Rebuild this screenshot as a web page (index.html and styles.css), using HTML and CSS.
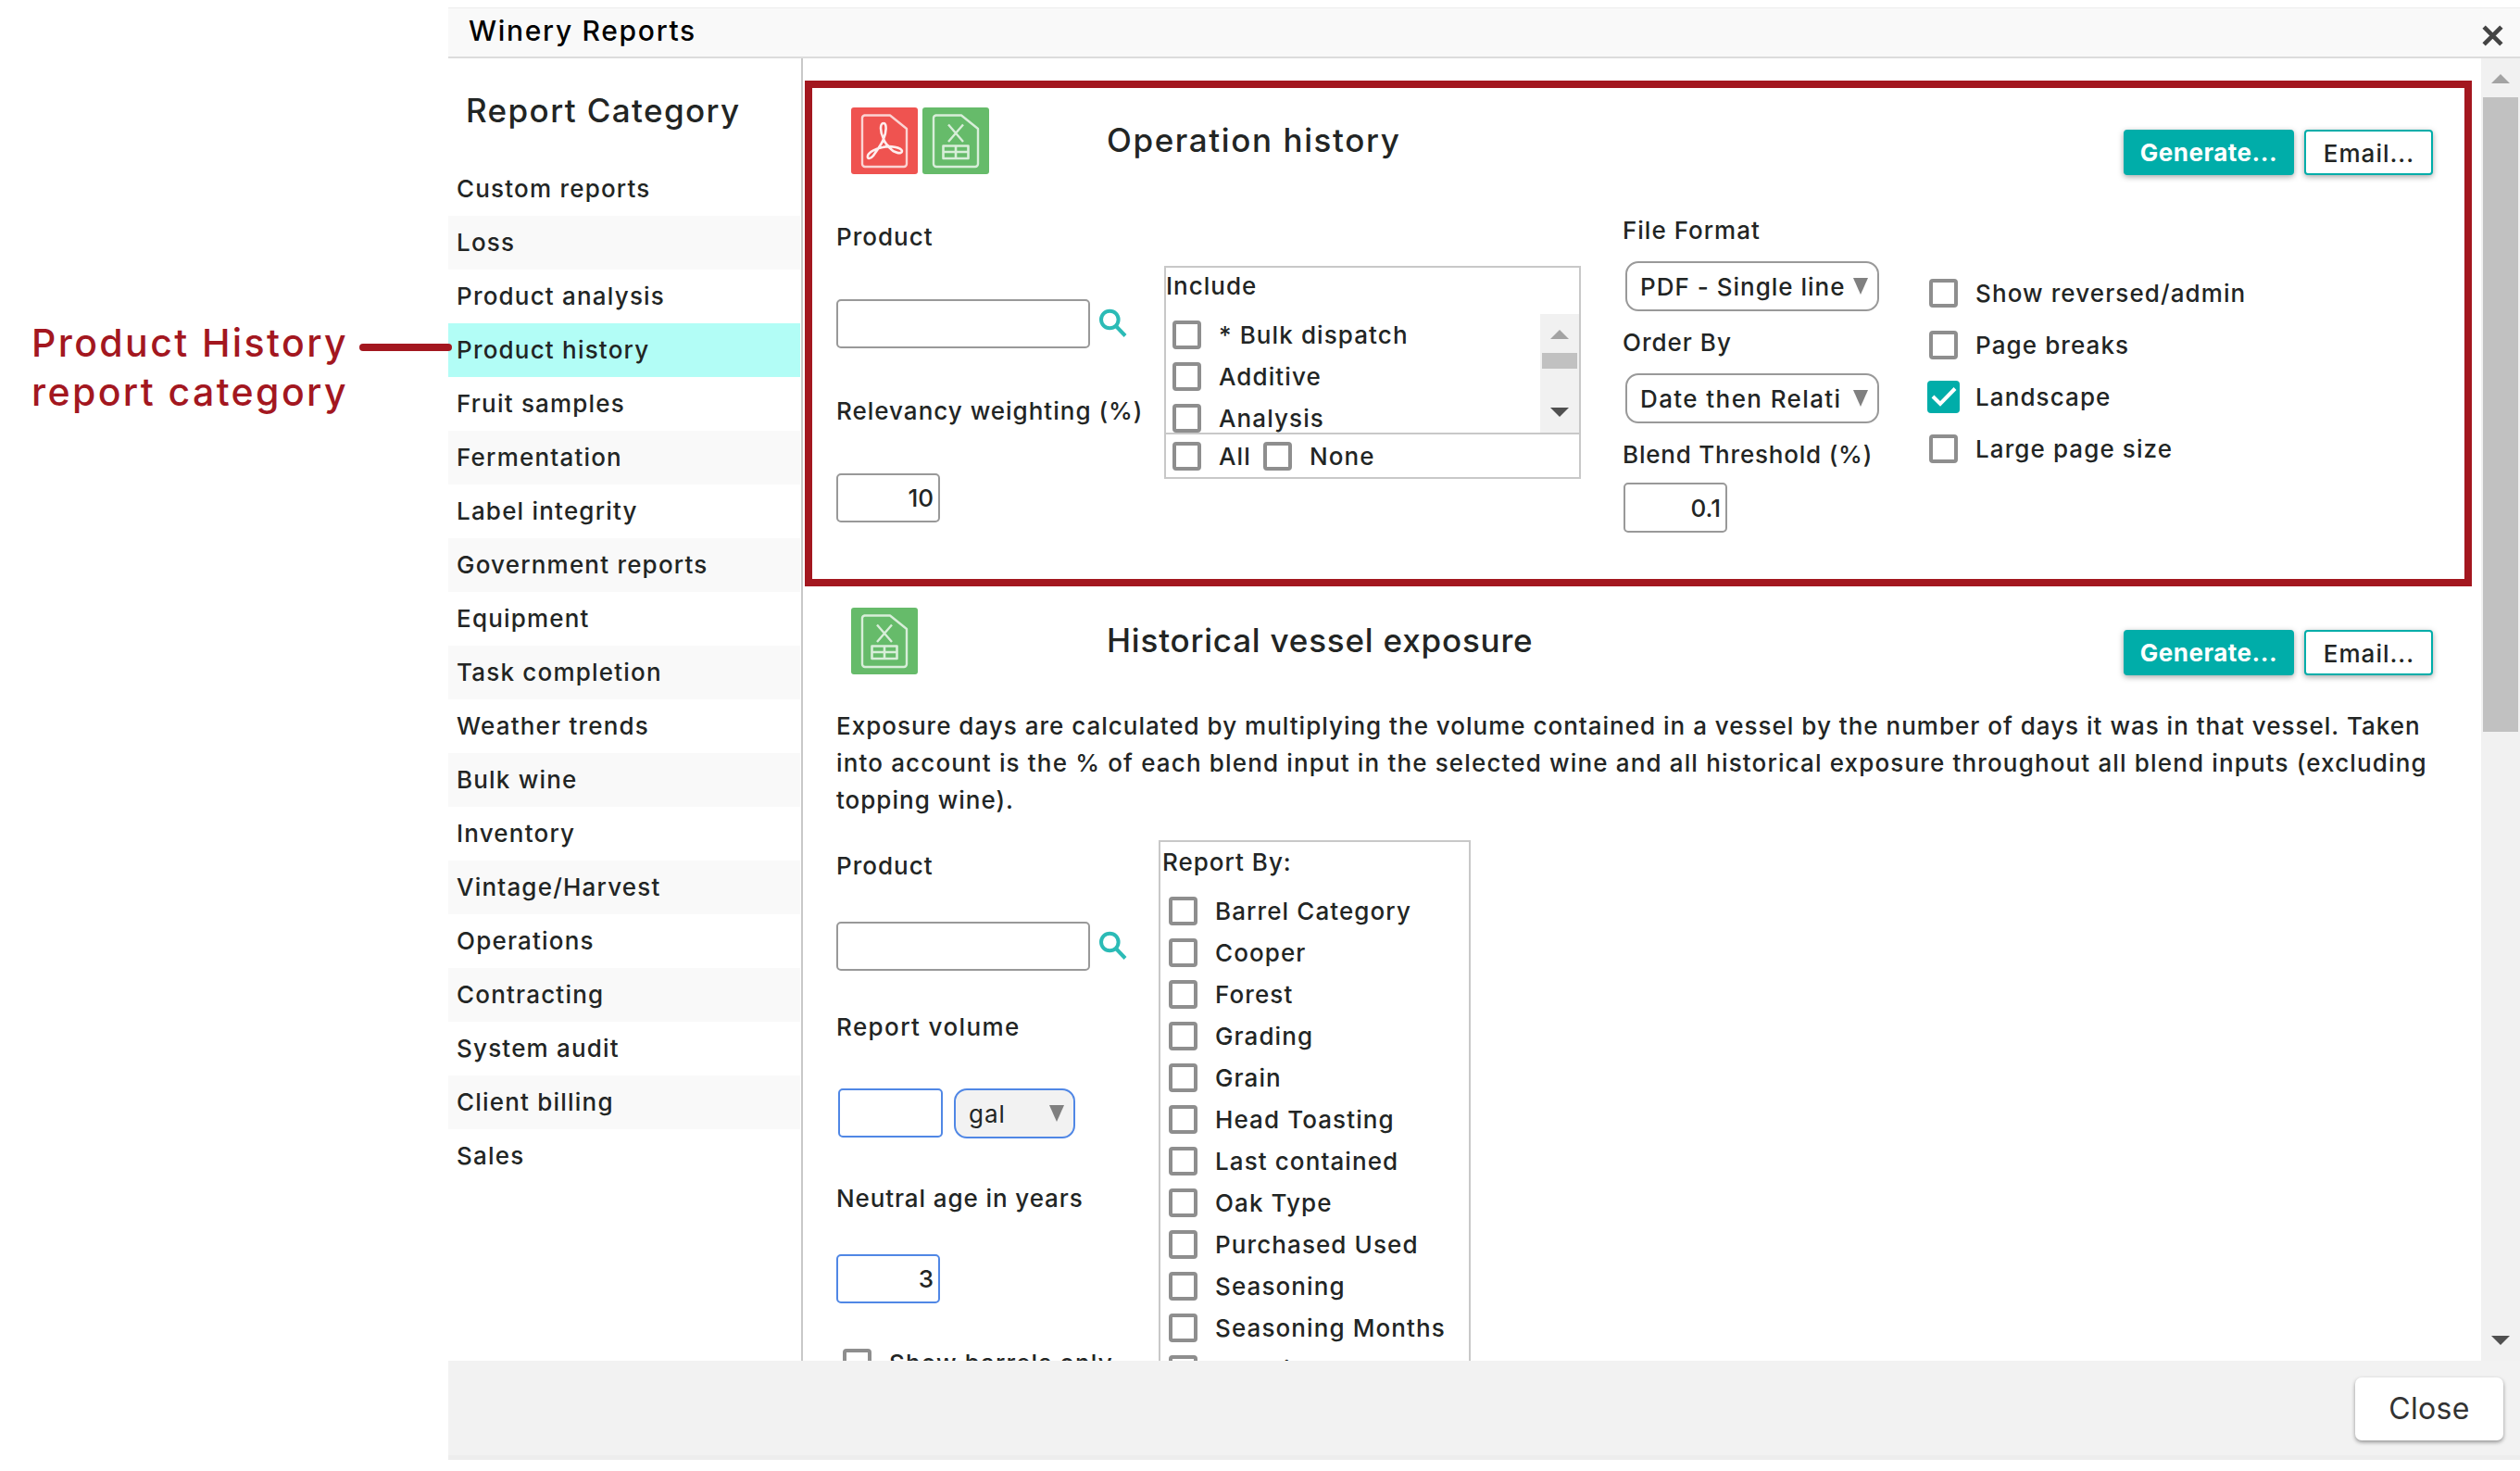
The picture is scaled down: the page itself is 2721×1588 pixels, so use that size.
FILE: index.html
```html
<!DOCTYPE html>
<html lang="en">
<head>
  <meta charset="UTF-8" />
  <title>Winery Reports</title>
  <link rel="stylesheet" href="styles.css">
</head>
<body>

  <!-- shared icons -->
  <svg class="icon-defs" width="0" height="0">
    <symbol id="icon-pdf" viewBox="0 0 72 72">
      <rect width="72" height="72" rx="3" fill="#ef5350"/>
      <g fill="none" stroke="#fff" stroke-linejoin="round">
        <path stroke-width="2.400" stroke-opacity=".75" d="M14 8.500H42L60 23V61a3 3 0 0 1-3 3H15a3 3 0 0 1-3-3V11a3 3 0 0 1 3-2.500"/>
        <path stroke-width="2.600" stroke-opacity=".9" d="M35 34C31 26 31 17 35 17C39 17 38 27 35 34C33 40 28 46 24 52C21 56 17 56 18 52C19 48 28 44 34 43C42 41 54 43 55 47C55 51 46 49 42 44C38 40 36 37 35 34Z"/>
      </g>
    </symbol>
    <symbol id="icon-xls" viewBox="0 0 72 72">
      <rect width="72" height="72" rx="3" fill="#66bb6a"/>
      <g fill="none" stroke="#fff" stroke-opacity=".75" stroke-width="2.400" stroke-linejoin="round">
        <path d="M14 8.500H42L60 23V61a3 3 0 0 1-3 3H15a3 3 0 0 1-3-3V11a3 3 0 0 1 3-2.500"/>
        <path d="M28 18.500L44 37M44 18.500L28 37"/>
        <path stroke-width="2.600" d="M22.500 41.500H49.500V55H22.500ZM22.500 48H49.500M36 41.500V55"/>
      </g>
    </symbol>
    <symbol id="icon-search" viewBox="0 0 32 32">
      <g fill="none" stroke="#2bbbb6" stroke-width="4">
        <circle cx="12.300" cy="12" r="9.300"/>
        <path d="M18.500 18.500L29 29.500"/>
      </g>
    </symbol>
  </svg>

  <div class="note">
    <div class="note-text">Product History<br/>report category</div>
    <div class="note-line"></div>
  </div>

  <div class="dialog">
    <div class="dialog-header">
      <div class="dialog-title">Winery Reports</div>
      <svg class="dialog-x" viewBox="0 0 24 24"><path d="M3 3L21 21M21 3L3 21" stroke="#444" stroke-width="4.500"/></svg>
    </div>

    <div class="dialog-body">
      <div class="sidebar">
        <div class="sidebar-title">Report Category</div>
        <ul class="categories">
          <li>Custom reports</li>
          <li>Loss</li>
          <li>Product analysis</li>
          <li class="active">Product history</li>
          <li>Fruit samples</li>
          <li>Fermentation</li>
          <li>Label integrity</li>
          <li>Government reports</li>
          <li>Equipment</li>
          <li>Task completion</li>
          <li>Weather trends</li>
          <li>Bulk wine</li>
          <li>Inventory</li>
          <li>Vintage/Harvest</li>
          <li>Operations</li>
          <li>Contracting</li>
          <li>System audit</li>
          <li>Client billing</li>
          <li>Sales</li>
        </ul>
      </div>

      <div class="reports">
        <!-- Operation history -->
        <div class="report highlighted">
          <div class="report-head">
            <div class="report-icons">
              <svg><use href="#icon-pdf"/></svg>
              <svg><use href="#icon-xls"/></svg>
            </div>
            <div class="report-title operation-title">Operation history</div>
            <div class="report-buttons">
              <button class="btn btn-primary">Generate...</button>
              <button class="btn">Email...</button>
            </div>
          </div>

          <div class="columns">
            <div class="product-col">
              <div class="label">Product</div>
              <div class="field-row">
                <input type="text" class="text-input" />
                <svg class="search"><use href="#icon-search"/></svg>
              </div>
              <div class="label weighting-label">Relevancy weighting (%)</div>
              <div class="field-row">
                <input type="text" class="text-input number" value="10" />
              </div>
            </div>

            <div class="panel include-panel">
              <div class="panel-title">Include</div>
              <div class="include-list">
                <div class="include-items">
                  <label class="check"><span class="box"></span>* Bulk dispatch</label>
                  <label class="check"><span class="box"></span>Additive</label>
                  <label class="check"><span class="box"></span>Analysis</label>
                </div>
                <div class="scrollbar small">
                  <div class="arrow-up"></div>
                  <div class="thumb"></div>
                  <div class="arrow-down"></div>
                </div>
              </div>
              <div class="include-footer">
                <label class="check check-all"><span class="box"></span>All</label>
                <label class="check"><span class="box"></span>None</label>
              </div>
            </div>

            <div class="format-col">
              <div class="label">File Format</div>
              <div class="select"><span class="select-text">PDF - Single line</span><span class="caret"></span></div>
              <div class="label">Order By</div>
              <div class="select"><span class="select-text wide-text">Date then Relati</span><span class="caret"></span></div>
              <div class="label threshold-label">Blend Threshold (%)</div>
              <input type="text" class="text-input number threshold" value="0.1" />
            </div>

            <div class="options-col">
              <label class="check"><span class="box"></span>Show reversed/admin</label>
              <label class="check"><span class="box"></span>Page breaks</label>
              <label class="check"><span class="box checked"><svg viewBox="0 0 35 35"><path d="M6 17L14 25L30 8.500" fill="none" stroke="#fff" stroke-width="4"/></svg></span>Landscape</label>
              <label class="check"><span class="box"></span>Large page size</label>
            </div>
          </div>
        </div>

        <!-- Historical vessel exposure -->
        <div class="report vessel">
          <div class="report-head">
            <div class="report-icons">
              <svg><use href="#icon-xls"/></svg>
            </div>
            <div class="report-title">Historical vessel exposure</div>
            <div class="report-buttons">
              <button class="btn btn-primary">Generate...</button>
              <button class="btn">Email...</button>
            </div>
          </div>

          <p class="description">Exposure days are calculated by multiplying the volume contained in a vessel by the number of days it was in that vessel. Taken <span class="line-two">into account is the % of each blend input in the selected wine and all historical exposure throughout all blend inputs (excluding</span> topping wine).</p>

          <div class="columns">
            <div class="product-col">
              <div class="label">Product</div>
              <div class="field-row">
                <input type="text" class="text-input" />
                <svg class="search"><use href="#icon-search"/></svg>
              </div>
              <div class="label volume-label">Report volume</div>
              <div class="field-row volume-row">
                <input type="text" class="text-input number blue" />
                <div class="select unit"><span class="select-text">gal</span><span class="caret"></span></div>
              </div>
              <div class="label age-label">Neutral age in years</div>
              <div class="field-row">
                <input type="text" class="text-input number blue" value="3" />
              </div>
              <label class="check barrels"><span class="box"></span>Show barrels only</label>
            </div>

            <div class="panel report-by">
              <div class="panel-title">Report By:</div>
              <label class="check"><span class="box"></span>Barrel Category</label>
              <label class="check"><span class="box"></span>Cooper</label>
              <label class="check"><span class="box"></span>Forest</label>
              <label class="check"><span class="box"></span>Grading</label>
              <label class="check"><span class="box"></span>Grain</label>
              <label class="check"><span class="box"></span>Head Toasting</label>
              <label class="check"><span class="box"></span>Last contained</label>
              <label class="check"><span class="box"></span>Oak Type</label>
              <label class="check"><span class="box"></span>Purchased Used</label>
              <label class="check"><span class="box"></span>Seasoning</label>
              <label class="check"><span class="box"></span>Seasoning Months</label>
              <label class="check"><span class="box"></span>Toasting</label>
            </div>
          </div>
        </div>
      </div>

      <div class="scrollbar">
        <div class="arrow-up"></div>
        <div class="thumb"></div>
        <div class="arrow-down"></div>
      </div>
    </div>

    <div class="dialog-footer">
      <button class="close-btn">Close</button>
    </div>
  </div>

</body>
</html>
```
FILE: styles.css
```css
* {
  box-sizing: border-box;
}
body {
  margin: 0;
  height: 1588px;
  display: flex;
  overflow: hidden;
  background: white;
  color: #222524;
  font-family: Inter, "Open Sans", sans-serif;
  font-size: 26px;
  font-weight: 500;
  letter-spacing: 1px;
}
.icon-defs {
  position: absolute;
}

/* Side note */
.note {
  width: 484px;
  flex: none;
  display: flex;
  padding: 344px 0 0 34px;
  color: #a3171f;
  z-index: 2;
}
.note-text {
  width: 354px;
  flex: none;
  font-size: 41px;
  line-height: 53px;
  letter-spacing: 2.4px;
  white-space: nowrap;
}
.note-line {
  flex: none;
  width: 100px;
  height: 8px;
  margin-top: 27px;
  border-radius: 4px;
  background: #a3171f;
}

/* Dialog */
.dialog {
  flex: 1;
  min-width: 0;
  height: 1568px;
  margin-top: 8px;
  display: flex;
  flex-direction: column;
}
.dialog-header {
  height: 55px;
  flex: none;
  display: flex;
  justify-content: space-between;
  padding: 0 17px 0 22px;
  background: #f9f9f9;
  border-top: 1px solid #ececec;
  border-bottom: 2px solid #dcdcdc;
}
.dialog-title {
  font-size: 30px;
  line-height: 48px;
  letter-spacing: 1.7px;
  color: #000;
}
.dialog-x {
  width: 25px;
  height: 25px;
  margin-top: 17px;
}
.dialog-body {
  flex: 1;
  min-height: 0;
  display: flex;
}
.dialog-footer {
  height: 107px;
  flex: none;
  display: flex;
  justify-content: flex-end;
  padding: 18px 18px 0 0;
  background: #f2f2f2;
  border-bottom: 5px solid #ededed;
}
.close-btn {
  width: 160px;
  height: 68px;
  padding: 0 0 2px;
  border: none;
  border-radius: 7px;
  background: white;
  color: #333;
  font-family: inherit;
  font-size: 32px;
  font-weight: 400;
  letter-spacing: 0.3px;
  box-shadow: 0 2px 4px rgba(0,0,0,0.4);
}

/* Sidebar */
.sidebar {
  width: 383px;
  flex: none;
  border-right: 2px solid #c8c8c8;
}
.sidebar-title {
  height: 112px;
  padding-left: 19px;
  font-size: 35px;
  line-height: 112px;
  letter-spacing: 1.4px;
}
.categories {
  list-style: none;
  margin: 0 1px 0 0;
  padding: 0;
}
.categories li {
  height: 58px;
  padding-left: 9px;
  line-height: 58px;
  letter-spacing: 1.2px;
}
.categories li:nth-child(even) {
  background: #f9f9f9;
}
.categories li.active {
  background: #b2fdf6;
}

/* Reports */
.reports {
  flex: 1;
  min-width: 0;
  overflow: hidden;
}
.report {
  padding: 2px 52px 0 36px;
}
.report.highlighted {
  height: 546px;
  margin: 24px 10px 0 2px;
  padding: 0 34px 0 26px;
  border: 8px solid #a3171f;
}
.report-head {
  height: 133px;
  display: flex;
  align-items: flex-start;
  padding: 21px 0 0 16px;
}
.vessel .report-head {
  height: 129px;
}
.report-icons {
  width: 276px;
  display: flex;
  gap: 5px;
}
.report-icons svg {
  width: 72px;
  height: 72px;
}
.report-title {
  margin-top: 15px;
  font-size: 35px;
  line-height: 40px;
  letter-spacing: 0.8px;
}
.operation-title {
  letter-spacing: 1.6px;
}
.report-buttons {
  display: flex;
  gap: 11px;
  margin: 24px 0 0 auto;
}
.btn {
  width: 139px;
  height: 49px;
  padding: 1px 0 0 1px;
  border: 2px solid #00ada9;
  border-radius: 4px;
  background: white;
  color: #222524;
  font-family: inherit;
  font-size: 26px;
  font-weight: 500;
  letter-spacing: 1px;
  box-shadow: 0 2px 6px rgba(0,0,0,0.35);
}
.btn-primary {
  width: 184px;
  padding: 0;
  background: #00ada9;
  color: white;
  font-weight: 700;
  letter-spacing: 0.5px;
}
.description {
  margin: 0 0 23px;
  width: 1740px;
  line-height: 40px;
}
.line-two {
  letter-spacing: 1.15px;
}

/* Form columns */
.columns {
  display: flex;
  align-items: flex-start;
}
.product-col {
  width: 354px;
  flex: none;
  padding-top: 7px;
}
.vessel .product-col {
  width: 348px;
}
.label {
  height: 40px;
  line-height: 41px;
  white-space: nowrap;
}
.field-row {
  display: flex;
  align-items: flex-start;
  padding-top: 48px;
}
.weighting-label {
  margin-top: 47px;
}
.text-input {
  width: 274px;
  height: 53px;
  padding: 0 6px;
  border: 2px solid #999;
  border-radius: 5px;
  background: white;
  color: #222524;
  font: inherit;
  letter-spacing: 0;
}
.number {
  width: 112px;
  padding: 0 5px;
  text-align: right;
}
.blue {
  border-color: #5087e5;
}
.search {
  width: 32px;
  height: 32px;
  margin: 10px 0 0 9px;
}
.select {
  width: 274px;
  height: 54px;
  margin: 14px 0 13px 3px;
  padding: 0 10px 0 14px;
  display: flex;
  align-items: center;
  justify-content: space-between;
  border: 2px solid #999;
  border-radius: 14px;
}
.select-text {
  width: 223px;
  overflow: hidden;
  white-space: nowrap;
}
.wide-text {
  letter-spacing: 1.4px;
}
.caret {
  border-left: 8.5px solid transparent;
  border-right: 8.5px solid transparent;
  border-top: 18px solid #808080;
}

/* Checkboxes */
.check {
  height: 45px;
  display: flex;
  align-items: center;
  gap: 19px;
  line-height: 31px;
  letter-spacing: 1.1px;
  white-space: nowrap;
}
.box {
  width: 31px;
  height: 31px;
  flex: none;
  border: 4px solid #8e8e8e;
  border-radius: 4px;
}
.box.checked {
  width: 35px;
  height: 35px;
  margin: 0 -2px;
  border: none;
  background: #00ada9;
}
.box svg {
  display: block;
}

/* Include list */
.panel {
  flex: none;
  border: 2px solid #c8c8c8;
}
.panel-title {
  height: 38px;
  line-height: 39px;
}
.include-panel {
  width: 450px;
  height: 230px;
  margin-top: 59px;
}
.include-list {
  height: 130px;
  margin-top: 12px;
  display: flex;
  justify-content: space-between;
  overflow: hidden;
  border-bottom: 2px solid #c8c8c8;
}
.include-items {
  padding-left: 7px;
}
.include-footer {
  display: flex;
  padding: 1px 0 0 7px;
}
.check-all {
  width: 98px;
}

/* Scrollbars */
.scrollbar {
  width: 42px;
  flex: none;
  display: flex;
  flex-direction: column;
  align-items: center;
  padding: 17px 0;
  background: #f1f1f1;
}
.scrollbar .thumb {
  width: 38px;
  height: 685px;
  margin-top: 15px;
  background: #c1c1c1;
}
.scrollbar.small .thumb {
  height: 17px;
}
.arrow-up {
  border-left: 10px solid transparent;
  border-right: 10px solid transparent;
  border-bottom: 10px solid #a3a3a3;
}
.arrow-down {
  margin-top: auto;
  border-left: 10px solid transparent;
  border-right: 10px solid transparent;
  border-top: 10px solid #505050;
}

/* Output options */
.format-col {
  width: 331px;
  flex: none;
  margin-left: 45px;
}
.threshold-label {
  letter-spacing: 0.8px;
}
.threshold {
  display: block;
  height: 54px;
  margin: 11px 0 0 1px;
}
.options-col {
  padding-top: 60px;
}
.options-col .check {
  height: 56px;
}

/* Vessel exposure form */
.vessel .field-row {
  padding-top: 41px;
}
.volume-label {
  margin-top: 40px;
  letter-spacing: 1.4px;
}
.vessel .volume-row {
  padding: 47px 0 0 2px;
}
.volume-row .number {
  width: 113px;
}
.select.unit {
  width: 131px;
  margin: 0 0 0 12px;
  background: #f2f2f2;
  border-color: #5087e5;
}
.unit .select-text {
  width: auto;
  font-weight: 400;
}
.age-label {
  margin-top: 44px;
  letter-spacing: 0.9px;
}
.barrels {
  margin-top: 42px;
  padding-left: 7px;
}
.report-by {
  width: 337px;
}
.report-by .panel-title {
  height: 52px;
  padding-left: 2px;
  line-height: 43px;
}
.report-by .check {
  padding-left: 9px;
}
```
